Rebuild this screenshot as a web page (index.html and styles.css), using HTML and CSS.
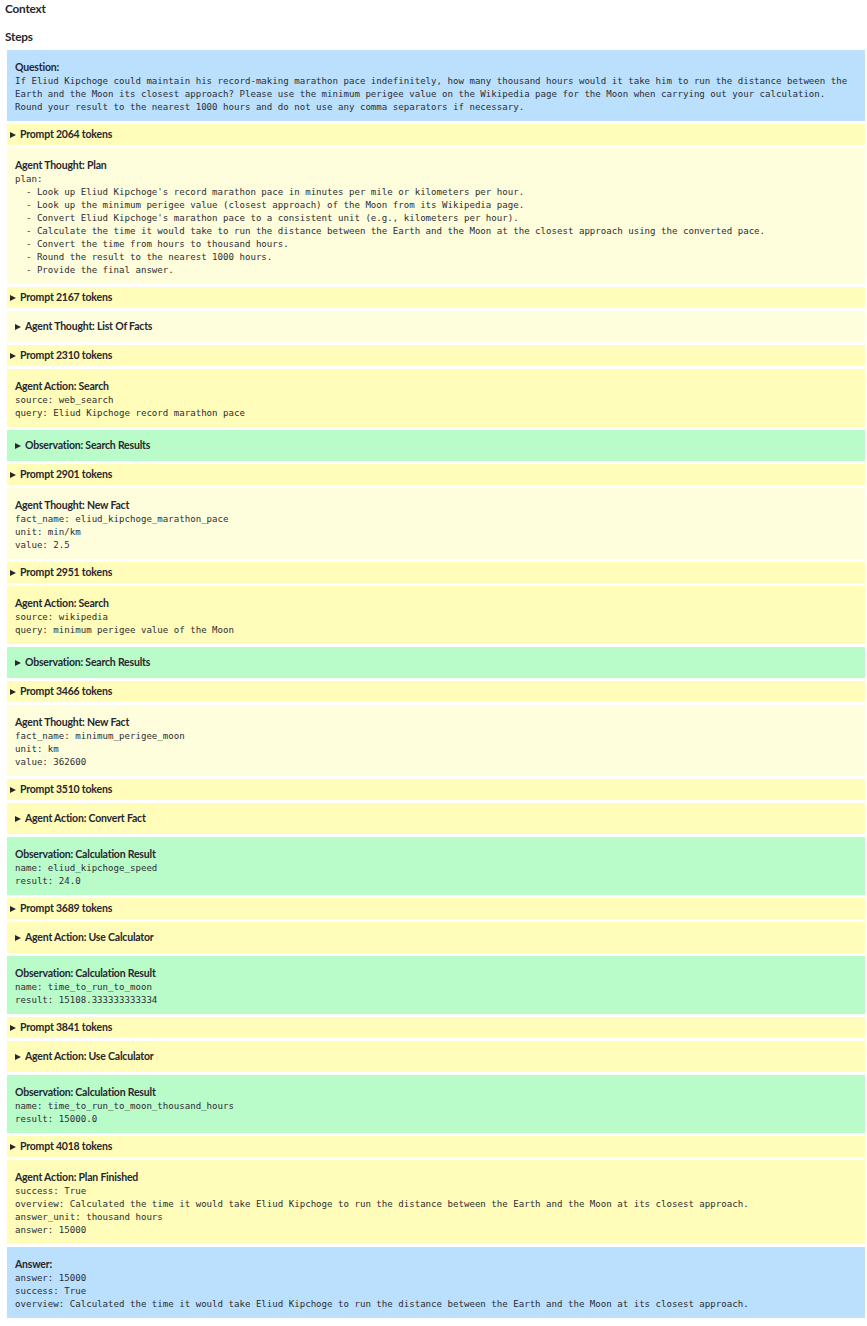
FILE: index.html
```html
<!DOCTYPE html>
<html>
<head>
<meta charset="utf-8">
<title>Steps</title>
<link rel="stylesheet" href="styles.css">
</head>
<body>
<h2 class="heading heading-context">Context</h2>
<h2 class="heading heading-steps">Steps</h2>
<div class="steps">
  <div class="box blue">
    <div class="title">Question:</div>
    <pre class="mono">If Eliud Kipchoge could maintain his record-making marathon pace indefinitely, how many thousand hours would it take him to run the distance between the
Earth and the Moon its closest approach? Please use the minimum perigee value on the Wikipedia page for the Moon when carrying out your calculation.
Round your result to the nearest 1000 hours and do not use any comma separators if necessary.</pre>
  </div>

  <details class="prompt"><summary><span class="tri"></span>Prompt 2064 tokens</summary></details>

  <div class="box light">
    <div class="title">Agent Thought: Plan</div>
    <pre class="mono">plan:
  - Look up Eliud Kipchoge's record marathon pace in minutes per mile or kilometers per hour.
  - Look up the minimum perigee value (closest approach) of the Moon from its Wikipedia page.
  - Convert Eliud Kipchoge's marathon pace to a consistent unit (e.g., kilometers per hour).
  - Calculate the time it would take to run the distance between the Earth and the Moon at the closest approach using the converted pace.
  - Convert the time from hours to thousand hours.
  - Round the result to the nearest 1000 hours.
  - Provide the final answer.</pre>
  </div>

  <details class="prompt"><summary><span class="tri"></span>Prompt 2167 tokens</summary></details>

  <div class="wrap light"><details class="nested"><summary><span class="tri"></span>Agent Thought: List Of Facts</summary></details></div>

  <details class="prompt"><summary><span class="tri"></span>Prompt 2310 tokens</summary></details>

  <div class="box yellow">
    <div class="title">Agent Action: Search</div>
    <pre class="mono">source: web_search
query: Eliud Kipchoge record marathon pace</pre>
  </div>

  <div class="wrap green"><details class="nested"><summary><span class="tri"></span>Observation: Search Results</summary></details></div>

  <details class="prompt"><summary><span class="tri"></span>Prompt 2901 tokens</summary></details>

  <div class="box light">
    <div class="title">Agent Thought: New Fact</div>
    <pre class="mono">fact_name: eliud_kipchoge_marathon_pace
unit: min/km
value: 2.5</pre>
  </div>

  <details class="prompt"><summary><span class="tri"></span>Prompt 2951 tokens</summary></details>

  <div class="box yellow">
    <div class="title">Agent Action: Search</div>
    <pre class="mono">source: wikipedia
query: minimum perigee value of the Moon</pre>
  </div>

  <div class="wrap green"><details class="nested"><summary><span class="tri"></span>Observation: Search Results</summary></details></div>

  <details class="prompt"><summary><span class="tri"></span>Prompt 3466 tokens</summary></details>

  <div class="box light">
    <div class="title">Agent Thought: New Fact</div>
    <pre class="mono">fact_name: minimum_perigee_moon
unit: km
value: 362600</pre>
  </div>

  <details class="prompt"><summary><span class="tri"></span>Prompt 3510 tokens</summary></details>

  <div class="wrap yellow"><details class="nested"><summary><span class="tri"></span>Agent Action: Convert Fact</summary></details></div>

  <div class="box green">
    <div class="title">Observation: Calculation Result</div>
    <pre class="mono">name: eliud_kipchoge_speed
result: 24.0</pre>
  </div>

  <details class="prompt"><summary><span class="tri"></span>Prompt 3689 tokens</summary></details>

  <div class="wrap yellow"><details class="nested"><summary><span class="tri"></span>Agent Action: Use Calculator</summary></details></div>

  <div class="box green">
    <div class="title">Observation: Calculation Result</div>
    <pre class="mono">name: time_to_run_to_moon
result: 15108.333333333334</pre>
  </div>

  <details class="prompt"><summary><span class="tri"></span>Prompt 3841 tokens</summary></details>

  <div class="wrap yellow"><details class="nested"><summary><span class="tri"></span>Agent Action: Use Calculator</summary></details></div>

  <div class="box green">
    <div class="title">Observation: Calculation Result</div>
    <pre class="mono">name: time_to_run_to_moon_thousand_hours
result: 15000.0</pre>
  </div>

  <details class="prompt"><summary><span class="tri"></span>Prompt 4018 tokens</summary></details>

  <div class="box yellow">
    <div class="title">Agent Action: Plan Finished</div>
    <pre class="mono">success: True
overview: Calculated the time it would take Eliud Kipchoge to run the distance between the Earth and the Moon at its closest approach.
answer_unit: thousand hours
answer: 15000</pre>
  </div>

  <div class="box blue">
    <div class="title">Answer:</div>
    <pre class="mono">answer: 15000
success: True
overview: Calculated the time it would take Eliud Kipchoge to run the distance between the Earth and the Moon at its closest approach.</pre>
  </div>
</div>
</body>
</html>
```

FILE: styles.css
```css
html, body {
  margin: 0;
  padding: 0;
  background: #ffffff;
}

body {
  padding-top: 1px;
  font-family: "Lato", "Noto Sans", sans-serif;
  color: #262730;
}

.heading {
  margin: 0;
  padding-left: 5px;
  font-size: 11.8px;
  letter-spacing: -0.2px;
  line-height: 16px;
  font-weight: 700;
}

.heading-steps {
  margin-top: 12px;
}

.steps {
  display: flex;
  flex-direction: column;
  gap: 3px;
  margin-top: 5px;
  padding: 0 2px 0 7px;
}

.blue { background: #bae0fe; }
.yellow { background: #fffdb9; }
.light { background: #fffedc; }
.green { background: #b9fbc9; }

.box {
  padding: 9.5px 8px 7.5px 8px;
}

.title {
  font-size: 10.5px;
  letter-spacing: -0.2px;
  line-height: 15px;
  font-weight: 700;
}

.mono {
  margin: 0;
  font-family: "DejaVu Sans Mono", "Liberation Mono", monospace;
  font-size: 9.1px;
  line-height: 13px;
  color: #2c2d33;
  white-space: pre;
}

details summary {
  list-style: none;
  display: flex;
  align-items: center;
  font-size: 10.5px;
  letter-spacing: -0.2px;
  font-weight: 700;
  line-height: 13px;
  cursor: pointer;
}

details summary::-webkit-details-marker {
  display: none;
}

.tri {
  width: 0;
  height: 0;
  border-left: 6px solid #262730;
  border-top: 3.5px solid transparent;
  border-bottom: 3.5px solid transparent;
  margin-right: 4px;
}

.prompt {
  background: #fffdb9;
}

.prompt summary {
  padding: 4px 3px;
}

.wrap {
  padding: 5px 3px;
}

.nested summary {
  padding: 4px 5px;
}
```
